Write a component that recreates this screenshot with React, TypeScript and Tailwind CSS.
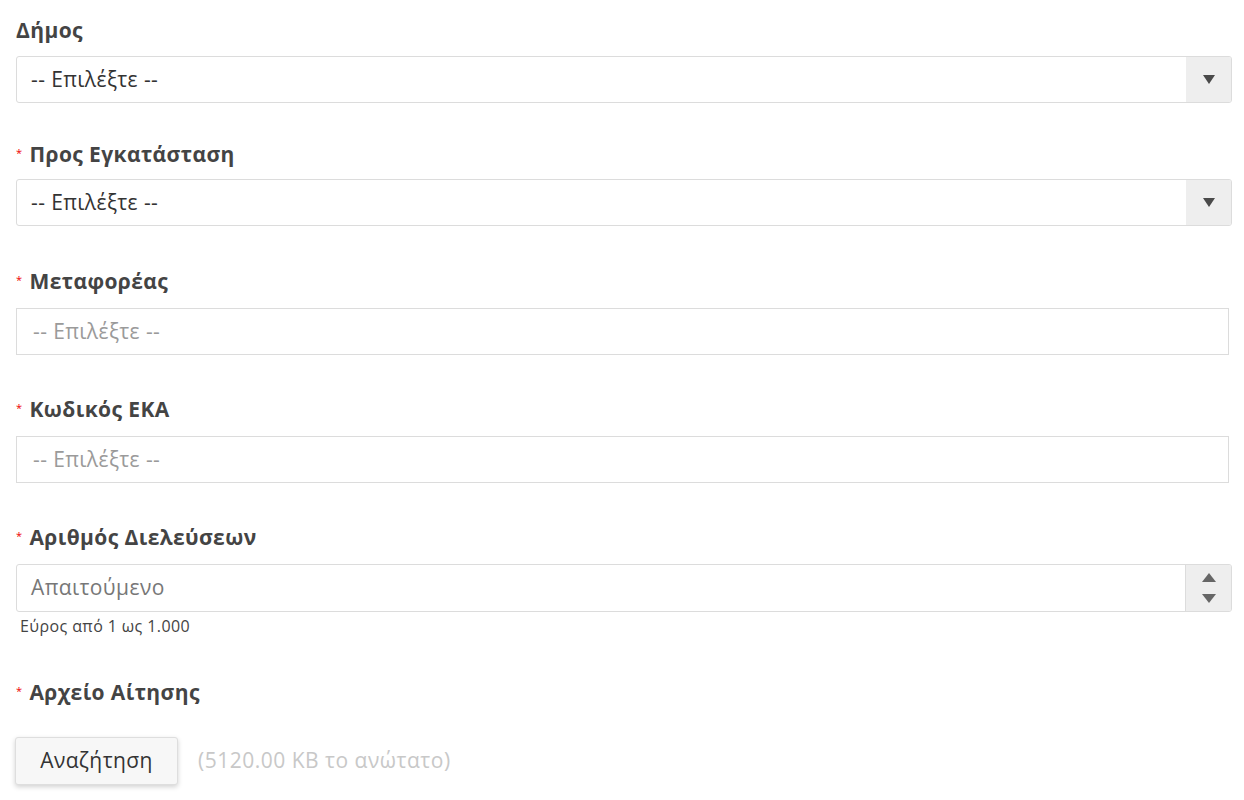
import React from "react";

const font = { fontFamily: '"Open Sans", "Noto Sans", sans-serif' };

function Label({ text, required }: { text: string; required?: boolean }) {
  return (
    <div className="flex h-[28px] items-center text-[21px] font-bold leading-[28px] tracking-[0.4px] text-[#444]">
      {required && <span className="mr-[7px] mt-[-2px] text-[11px] font-normal text-[#e00]">*</span>}
      <span>{text}</span>
    </div>
  );
}

function Select({ className }: { className?: string }) {
  return (
    <div className={`flex h-[47px] w-[1216px] overflow-hidden rounded-[3px] border border-[#dcdcdc] bg-white ${className ?? ""}`}>
      <div className="flex flex-1 items-center pl-[14px] text-[21px] tracking-[0.4px] text-[#333]">-- Επιλέξτε --</div>
      <div className="flex w-[45px] items-center justify-center bg-[#eeeeee]">
        <svg width="12" height="9" viewBox="0 0 12 9">
          <path d="M0 0h12L6 9z" fill="#4a4a4a" />
        </svg>
      </div>
    </div>
  );
}

function Choice({ className }: { className?: string }) {
  return (
    <div className={`flex h-[47px] w-[1213px] items-center border border-[#dcdcdc] bg-white pl-[16px] text-[21px] tracking-[0.4px] text-[#9a9a9a] ${className ?? ""}`}>
      -- Επιλέξτε --
    </div>
  );
}

export default function App() {
  return (
    <div className="min-h-[800px] bg-white pl-[16px] pt-[16px]" style={font}>
      <Label text="Δήμος" />
      <Select className="mt-[12px]" />

      <div className="mt-[37px]">
        <Label text="Προς Εγκατάσταση" required />
      </div>
      <Select className="mt-[11px]" />

      <div className="mt-[41px]">
        <Label text="Μεταφορέας" required />
      </div>
      <Choice className="mt-[13px]" />

      <div className="mt-[40px]">
        <Label text="Κωδικός ΕΚΑ" required />
      </div>
      <Choice className="mt-[13px]" />

      <div className="mt-[40px]">
        <Label text="Αριθμός Διελεύσεων" required />
      </div>
      <div className="mt-[13px] flex h-[48px] w-[1216px] overflow-hidden rounded-[3px] border border-[#dcdcdc] bg-white">
        <div className="flex flex-1 items-center pl-[14px] text-[21px] tracking-[0.4px] text-[#777]">Απαιτούμενο</div>
        <div className="flex w-[46px] flex-col items-center justify-center gap-[12px] border-l border-[#dcdcdc] bg-[#eeeeee]">
          <svg width="14" height="9" viewBox="0 0 14 9">
            <path d="M7 0l7 9H0z" fill="#666" />
          </svg>
          <svg width="14" height="9" viewBox="0 0 14 9">
            <path d="M0 0h14L7 9z" fill="#666" />
          </svg>
        </div>
      </div>
      <div className="mt-[4px] pl-[4px] text-[16px] leading-[20px] tracking-[0.4px] text-[#444]">Εύρος από 1 ως 1.000</div>

      <div className="mt-[42px]">
        <Label text="Αρχείο Αίτησης" required />
      </div>
      <div className="mt-[31px] flex items-center">
        <button className="ml-[-1px] h-[48px] w-[163px] rounded-[3px] border border-[#dedede] bg-[#f7f7f7] text-[21px] tracking-[0.4px] text-[#333] shadow-[0_2px_5px_rgba(0,0,0,0.18)]">
          Αναζήτηση
        </button>
        <span className="ml-[20px] text-[21px] tracking-[0.5px] text-[#c8c8c8]">(5120.00 KB το ανώτατο)</span>
      </div>
    </div>
  );
}
